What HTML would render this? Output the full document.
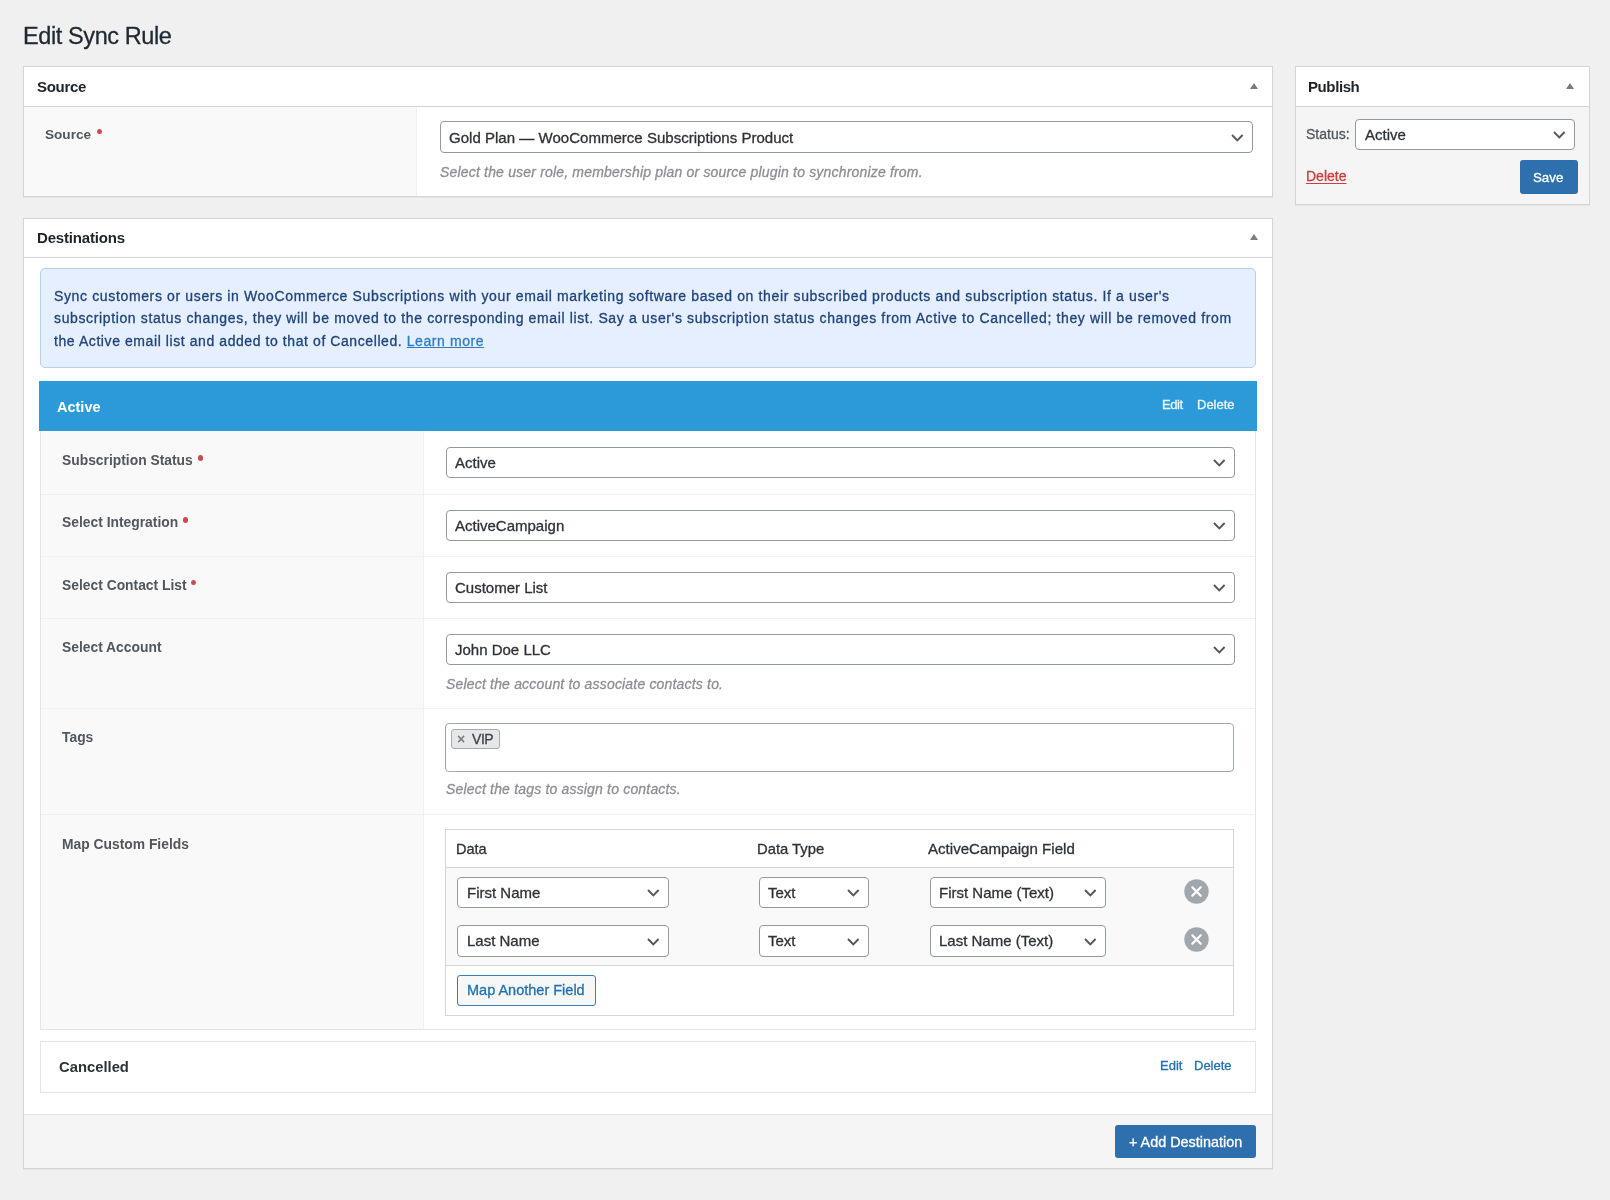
<!DOCTYPE html>
<html><head><meta charset="utf-8"><title>Edit Sync Rule</title>
<style>
html,body{margin:0;padding:0;}
body{width:1610px;height:1200px;background:#f0f0f1;position:relative;overflow:hidden;font-family:"Liberation Sans",sans-serif;}
body>div,body>svg{position:absolute;}
.t{white-space:nowrap;-webkit-text-stroke:0.3px currentColor;will-change:transform;}
</style></head><body>
<div class="t" style="left:22.90px;top:20px;font-size:23.5px;line-height:32px;color:#1f2832;letter-spacing:-0.4px;">Edit Sync Rule</div>
<div style="left:23px;top:66px;width:1250px;height:131px;background:#fff;border:1px solid #d3d4d7;box-sizing:border-box;box-shadow:0 1px 1px rgba(0,0,0,.04);"></div>
<div style="left:24px;top:106px;width:1248px;height:1px;background:#d3d4d7"></div>
<div class="t" style="left:36.50px;top:75px;font-size:15px;line-height:23px;color:#1d2327;font-weight:700;-webkit-text-stroke:0;letter-spacing:-0.3px;">Source</div>
<svg style="left:1248.6px;top:82px" width="10" height="8"><path d="M1 7 L5 1 L9 7 Z" fill="#787c82"/></svg>
<div style="left:24px;top:107px;width:393px;height:89px;background:#f9f9f9"></div>
<div style="left:416px;top:107px;width:1px;height:89px;background:#efeff0"></div>
<div class="t" style="left:45.00px;top:124px;font-size:13.6px;line-height:21px;color:#50575e;font-weight:700;-webkit-text-stroke:0;">Source</div>
<div style="left:96.5px;top:128.70000000000002px;width:5px;height:5.5px;border-radius:50%;background:#cc4a4b"></div>
<div style="left:439.5px;top:121px;width:813px;height:32px;background:#fff;border:1px solid #9499a0;border-radius:4px;box-sizing:border-box;"></div>
<div class="t" style="left:448.50px;top:126px;font-size:15.05px;line-height:23px;color:#2c3338;">Gold Plan — WooCommerce Subscriptions Product</div>
<svg style="left:1229.7px;top:132.85px" width="14.6" height="9.3"><path d="M2 2 L7.3 7.3 L12.6 2" fill="none" stroke="#50575e" stroke-width="1.9"/></svg>
<div class="t" style="left:439.50px;top:161px;font-size:14px;line-height:22px;color:#8c8f94;letter-spacing:0.18px;font-style:italic;">Select the user role, membership plan or source plugin to synchronize from.</div>
<div style="left:1295px;top:66px;width:295px;height:139px;background:#f5f5f5;border:1px solid #d3d4d7;box-sizing:border-box;box-shadow:0 1px 1px rgba(0,0,0,.04);"></div>
<div style="left:1296px;top:67px;width:293px;height:39px;background:#fff"></div>
<div style="left:1296px;top:106px;width:293px;height:1px;background:#d3d4d7"></div>
<div class="t" style="left:1308.00px;top:75px;font-size:15px;line-height:23px;color:#1d2327;font-weight:700;-webkit-text-stroke:0;letter-spacing:-0.4px;">Publish</div>
<svg style="left:1565px;top:82px" width="10" height="8"><path d="M1 7 L5 1 L9 7 Z" fill="#787c82"/></svg>
<div class="t" style="left:1306.00px;top:123px;font-size:14px;line-height:22px;color:#50575e;">Status:</div>
<div style="left:1355px;top:118.5px;width:220px;height:31px;background:#fff;border:1px solid #9499a0;border-radius:4px;box-sizing:border-box;"></div>
<div class="t" style="left:1365.00px;top:123px;font-size:15px;line-height:23px;color:#2c3338;">Active</div>
<svg style="left:1551.7px;top:129.85px" width="14.6" height="9.3"><path d="M2 2 L7.3 7.3 L12.6 2" fill="none" stroke="#50575e" stroke-width="1.9"/></svg>
<div class="t" style="left:1305.80px;top:165px;font-size:14px;line-height:22px;color:#c8403f;text-decoration:underline;text-underline-offset:2px;">Delete</div>
<div style="left:1520px;top:160px;width:58px;height:34px;background:#2e6fae;border-radius:3px"></div>
<div class="t" style="left:1533.30px;top:167px;font-size:13.3px;line-height:21px;color:#fff;">Save</div>
<div style="left:23px;top:218px;width:1250px;height:951px;background:#fff;border:1px solid #d3d4d7;box-sizing:border-box;box-shadow:0 1px 1px rgba(0,0,0,.04);"></div>
<div style="left:24px;top:257px;width:1248px;height:1px;background:#d3d4d7"></div>
<div class="t" style="left:37.10px;top:226px;font-size:15px;line-height:23px;color:#1d2327;font-weight:700;-webkit-text-stroke:0;letter-spacing:-0.18px;">Destinations</div>
<svg style="left:1248.6px;top:233px" width="10" height="8"><path d="M1 7 L5 1 L9 7 Z" fill="#787c82"/></svg>
<div style="left:40px;top:268px;width:1216px;height:100px;background:#e5efff;border:1px solid #b4cff0;border-radius:5px;box-sizing:border-box;"></div>
<div class="t" style="left:53.90px;top:285px;font-size:14px;line-height:22px;color:#20447a;letter-spacing:0.64px;">Sync customers or users in WooCommerce Subscriptions with your email marketing software based on their subscribed products and subscription status. If a user's</div>
<div class="t" style="left:53.90px;top:307px;font-size:14px;line-height:22px;color:#20447a;letter-spacing:0.63px;">subscription status changes, they will be moved to the corresponding email list. Say a user's subscription status changes from Active to Cancelled; they will be removed from</div>
<div class="t" style="left:53.90px;top:330px;font-size:14px;line-height:22px;color:#20447a;letter-spacing:0.58px;">the Active email list and added to that of Cancelled. <span style="color:#2f7cc0;text-decoration:underline">Learn more</span></div>
<div style="left:39px;top:381px;width:1218px;height:50px;background:#2c9ad9"></div>
<div class="t" style="left:57.00px;top:396px;font-size:14.5px;line-height:22px;color:#fff;font-weight:700;-webkit-text-stroke:0;">Active</div>
<div class="t" style="left:1162.00px;top:394px;font-size:13px;line-height:21px;color:#eef6fc;letter-spacing:-0.4px;">Edit</div>
<div class="t" style="left:1196.90px;top:394px;font-size:13px;line-height:21px;color:#eef6fc;">Delete</div>
<div style="left:40px;top:431px;width:1216px;height:599px;background:#fff;border:1px solid #e5e5e7;border-top:none;box-sizing:border-box;"></div>
<div style="left:41px;top:431px;width:382px;height:598px;background:#f9f9f9"></div>
<div style="left:423px;top:431px;width:1px;height:598px;background:#eeeff0"></div>
<div style="left:41px;top:494px;width:1214px;height:1px;background:#f0f0f1"></div>
<div style="left:41px;top:556px;width:1214px;height:1px;background:#f0f0f1"></div>
<div style="left:41px;top:618px;width:1214px;height:1px;background:#f0f0f1"></div>
<div style="left:41px;top:708px;width:1214px;height:1px;background:#f0f0f1"></div>
<div style="left:41px;top:814px;width:1214px;height:1px;background:#f0f0f1"></div>
<div class="t" style="left:61.70px;top:449px;font-size:13.85px;line-height:22px;color:#50575e;font-weight:700;-webkit-text-stroke:0;">Subscription Status</div>
<div class="t" style="left:61.70px;top:511px;font-size:13.85px;line-height:22px;color:#50575e;font-weight:700;-webkit-text-stroke:0;">Select Integration</div>
<div class="t" style="left:61.70px;top:574px;font-size:13.85px;line-height:22px;color:#50575e;font-weight:700;-webkit-text-stroke:0;">Select Contact List</div>
<div class="t" style="left:61.70px;top:636px;font-size:13.85px;line-height:22px;color:#50575e;font-weight:700;-webkit-text-stroke:0;">Select Account</div>
<div class="t" style="left:61.70px;top:726px;font-size:13.85px;line-height:22px;color:#50575e;font-weight:700;-webkit-text-stroke:0;">Tags</div>
<div class="t" style="left:61.70px;top:833px;font-size:13.85px;line-height:22px;color:#50575e;font-weight:700;-webkit-text-stroke:0;">Map Custom Fields</div>
<div style="left:197.54999999999998px;top:455.2px;width:5px;height:5.5px;border-radius:50%;background:#cc4a4b"></div>
<div style="left:182.95624999999998px;top:517.0px;width:5px;height:5.5px;border-radius:50%;background:#cc4a4b"></div>
<div style="left:191.42499999999998px;top:579.8px;width:5px;height:5.5px;border-radius:50%;background:#cc4a4b"></div>
<div style="left:446px;top:447px;width:789px;height:31px;background:#fff;border:1px solid #9499a0;border-radius:4px;box-sizing:border-box;"></div>
<div class="t" style="left:455.00px;top:451px;font-size:15px;line-height:23px;color:#2c3338;">Active</div>
<svg style="left:1212.2px;top:458.35px" width="14.6" height="9.3"><path d="M2 2 L7.3 7.3 L12.6 2" fill="none" stroke="#50575e" stroke-width="1.9"/></svg>
<div style="left:446px;top:509.5px;width:789px;height:31px;background:#fff;border:1px solid #9499a0;border-radius:4px;box-sizing:border-box;"></div>
<div class="t" style="left:455.00px;top:514px;font-size:15px;line-height:23px;color:#2c3338;">ActiveCampaign</div>
<svg style="left:1212.2px;top:520.85px" width="14.6" height="9.3"><path d="M2 2 L7.3 7.3 L12.6 2" fill="none" stroke="#50575e" stroke-width="1.9"/></svg>
<div style="left:446px;top:571.5px;width:789px;height:31px;background:#fff;border:1px solid #9499a0;border-radius:4px;box-sizing:border-box;"></div>
<div class="t" style="left:455.00px;top:576px;font-size:15px;line-height:23px;color:#2c3338;">Customer List</div>
<svg style="left:1212.2px;top:582.85px" width="14.6" height="9.3"><path d="M2 2 L7.3 7.3 L12.6 2" fill="none" stroke="#50575e" stroke-width="1.9"/></svg>
<div style="left:446px;top:633.5px;width:789px;height:31px;background:#fff;border:1px solid #9499a0;border-radius:4px;box-sizing:border-box;"></div>
<div class="t" style="left:455.00px;top:638px;font-size:15px;line-height:23px;color:#2c3338;">John Doe LLC</div>
<svg style="left:1212.2px;top:644.85px" width="14.6" height="9.3"><path d="M2 2 L7.3 7.3 L12.6 2" fill="none" stroke="#50575e" stroke-width="1.9"/></svg>
<div class="t" style="left:445.50px;top:673px;font-size:14px;line-height:22px;color:#8c8f94;letter-spacing:0.18px;font-style:italic;">Select the account to associate contacts to.</div>
<div style="left:445px;top:722.5px;width:789px;height:49px;background:#fff;border:1px solid #a2a6ad;border-radius:4px;box-sizing:border-box;"></div>
<div style="left:451px;top:729px;width:49px;height:20px;background:#e6e7e9;border:1px solid #a7aaad;border-radius:3px;box-sizing:border-box;"></div>
<div class="t" style="left:456.80px;top:728px;font-size:14px;line-height:22px;color:#787c82;font-weight:700;-webkit-text-stroke:0;">×</div>
<div class="t" style="left:472.10px;top:728px;font-size:14px;line-height:22px;color:#3c434a;letter-spacing:-0.45px;">VIP</div>
<div class="t" style="left:445.50px;top:778px;font-size:14px;line-height:22px;color:#8c8f94;letter-spacing:0.18px;font-style:italic;">Select the tags to assign to contacts.</div>
<div style="left:445px;top:828.5px;width:789px;height:187px;background:#fff;border:1px solid #d5d6d8;box-sizing:border-box;"></div>
<div style="left:446px;top:867px;width:787px;height:1px;background:#d5d6d8"></div>
<div style="left:446px;top:868px;width:787px;height:97px;background:#f9f9f9"></div>
<div style="left:446px;top:965px;width:787px;height:1px;background:#d5d6d8"></div>
<div class="t" style="left:455.90px;top:838px;font-size:14.5px;line-height:22px;color:#2c3338;">Data</div>
<div class="t" style="left:757.10px;top:838px;font-size:14.8px;line-height:22px;color:#2c3338;">Data Type</div>
<div class="t" style="left:928.30px;top:837px;font-size:15.1px;line-height:23px;color:#2c3338;">ActiveCampaign Field</div>
<div style="left:457px;top:876.5px;width:212px;height:31.5px;background:#fff;border:1px solid #9499a0;border-radius:4px;box-sizing:border-box;"></div>
<div class="t" style="left:466.50px;top:881px;font-size:15px;line-height:23px;color:#2c3338;">First Name</div>
<svg style="left:646.2px;top:888.1px" width="14.6" height="9.3"><path d="M2 2 L7.3 7.3 L12.6 2" fill="none" stroke="#50575e" stroke-width="1.9"/></svg>
<div style="left:758.5px;top:876.5px;width:110px;height:31.5px;background:#fff;border:1px solid #9499a0;border-radius:4px;box-sizing:border-box;"></div>
<div class="t" style="left:767.50px;top:881px;font-size:15px;line-height:23px;color:#2c3338;">Text</div>
<svg style="left:845.7px;top:888.1px" width="14.6" height="9.3"><path d="M2 2 L7.3 7.3 L12.6 2" fill="none" stroke="#50575e" stroke-width="1.9"/></svg>
<div style="left:930px;top:876.5px;width:176px;height:31.5px;background:#fff;border:1px solid #9499a0;border-radius:4px;box-sizing:border-box;"></div>
<div class="t" style="left:939.00px;top:881px;font-size:15px;line-height:23px;color:#2c3338;">First Name (Text)</div>
<svg style="left:1083.2px;top:888.1px" width="14.6" height="9.3"><path d="M2 2 L7.3 7.3 L12.6 2" fill="none" stroke="#50575e" stroke-width="1.9"/></svg>
<svg style="left:1184.2px;top:878.8px" width="25" height="25"><circle cx="12.5" cy="12.5" r="12.2" fill="#a2a7ae"/><path d="M8.3 8.3 L16.7 16.7 M16.7 8.3 L8.3 16.7" stroke="#fff" stroke-width="2.2" stroke-linecap="round"/></svg>
<div style="left:457px;top:925px;width:212px;height:31.5px;background:#fff;border:1px solid #9499a0;border-radius:4px;box-sizing:border-box;"></div>
<div class="t" style="left:466.50px;top:929px;font-size:15px;line-height:23px;color:#2c3338;">Last Name</div>
<svg style="left:646.2px;top:936.6px" width="14.6" height="9.3"><path d="M2 2 L7.3 7.3 L12.6 2" fill="none" stroke="#50575e" stroke-width="1.9"/></svg>
<div style="left:758.5px;top:925px;width:110px;height:31.5px;background:#fff;border:1px solid #9499a0;border-radius:4px;box-sizing:border-box;"></div>
<div class="t" style="left:767.50px;top:929px;font-size:15px;line-height:23px;color:#2c3338;">Text</div>
<svg style="left:845.7px;top:936.6px" width="14.6" height="9.3"><path d="M2 2 L7.3 7.3 L12.6 2" fill="none" stroke="#50575e" stroke-width="1.9"/></svg>
<div style="left:930px;top:925px;width:176px;height:31.5px;background:#fff;border:1px solid #9499a0;border-radius:4px;box-sizing:border-box;"></div>
<div class="t" style="left:939.00px;top:929px;font-size:15px;line-height:23px;color:#2c3338;">Last Name (Text)</div>
<svg style="left:1083.2px;top:936.6px" width="14.6" height="9.3"><path d="M2 2 L7.3 7.3 L12.6 2" fill="none" stroke="#50575e" stroke-width="1.9"/></svg>
<svg style="left:1184.2px;top:927.3px" width="25" height="25"><circle cx="12.5" cy="12.5" r="12.2" fill="#a2a7ae"/><path d="M8.3 8.3 L16.7 16.7 M16.7 8.3 L8.3 16.7" stroke="#fff" stroke-width="2.2" stroke-linecap="round"/></svg>
<div style="left:456.5px;top:974.5px;width:139.5px;height:31.5px;background:#f6f7f7;border:1px solid #3a80c0;border-radius:3px;box-sizing:border-box;"></div>
<div class="t" style="left:466.50px;top:979px;font-size:14.5px;line-height:22px;color:#2271b1;">Map Another Field</div>
<div style="left:40px;top:1041px;width:1216px;height:51.5px;background:#fff;border:1px solid #e5e5e7;box-sizing:border-box;"></div>
<div class="t" style="left:58.60px;top:1056px;font-size:14.8px;line-height:22px;color:#2c3338;font-weight:700;-webkit-text-stroke:0;">Cancelled</div>
<div class="t" style="left:1159.50px;top:1055px;font-size:13px;line-height:21px;color:#2271b1;">Edit</div>
<div class="t" style="left:1194.20px;top:1055px;font-size:13px;line-height:21px;color:#2271b1;">Delete</div>
<div style="left:24px;top:1114px;width:1248px;height:54px;background:#f5f5f5"></div>
<div style="left:24px;top:1114px;width:1248px;height:1px;background:#e3e3e5"></div>
<div style="left:1115px;top:1124.5px;width:141px;height:33.5px;background:#2e6fae;border-radius:3px"></div>
<div class="t" style="left:1128.70px;top:1131px;font-size:14.4px;line-height:22px;color:#fff;">+ Add Destination</div>
</body></html>
